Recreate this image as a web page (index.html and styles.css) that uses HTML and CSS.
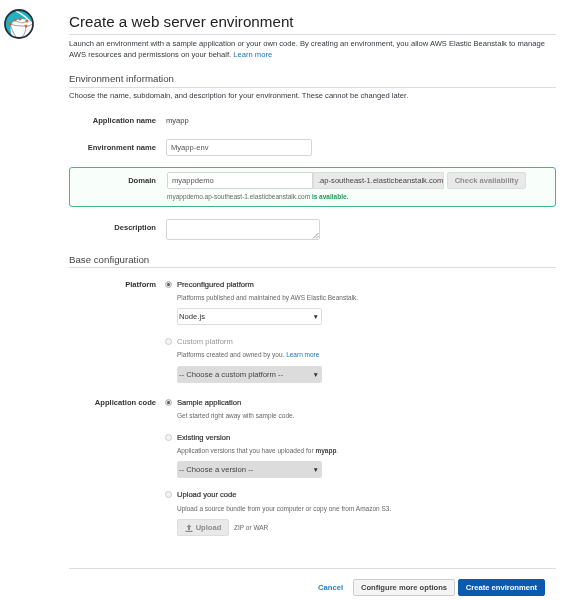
FILE: index.html
```html
<!DOCTYPE html>
<html lang="en">
<head>
<meta charset="utf-8">
<title>Create a web server environment</title>
<link rel="stylesheet" href="styles.css">
</head>
<body>
<div class="page">
  <aside class="logo">
    <svg width="32" height="32" viewBox="0 0 32 32">
      <circle cx="16" cy="16" r="14" fill="#fff"/>
      <path d="M9 28C4 25 2 20 2 16 2 8 8 2 16 2c4 0 8 2 10.500 5.500C28 10 29 12 29 14 23 10 15 10 10 14 7 17 7 23 9 28z" fill="#1fb3c4"/>
      <path d="M13 3C17 5 22 7 27 14" fill="none" stroke="#fff" stroke-width="1.400"/>
      <path d="M7 16c5 2 11 2 16 2M23 18c0 4-1 8-4 11M12 12c4 3 9 4 12 1M7 16c2 5 3 9 6 13M23 18c2 0 4 0 6-2" fill="none" stroke="#7d858b" stroke-width=".8"/>
      <circle cx="16" cy="16" r="14" fill="none" stroke="#27303a" stroke-width="1.800"/>
      <g fill="#d9663a"><circle cx="7" cy="16" r="1.700"/><circle cx="12" cy="12" r="1.500"/><circle cx="17" cy="11" r="1.500"/><circle cx="24" cy="13" r="1.600"/><circle cx="23" cy="18" r="1.500"/></g>
    </svg>
  </aside>
  <main class="main">
    <h1 class="title">Create a web server environment</h1>
    <p class="intro">Launch an environment with a sample application or your own code. By creating an environment, you allow AWS Elastic Beanstalk to manage AWS resources and permissions on your behalf. <a href="#">Learn more</a></p>

    <h2 class="section">Environment information</h2>
    <p class="section-note">Choose the name, subdomain, and description for your environment. These cannot be changed later.</p>

    <div class="row row-app">
      <div class="label">Application name</div>
      <div class="value">myapp</div>
    </div>
    <div class="row row-env">
      <div class="label">Environment name</div>
      <div class="input input-env">Myapp-env</div>
    </div>
    <div class="domain-box">
      <div class="domain-line">
        <div class="label">Domain</div>
        <div class="input input-domain">myappdemo</div>
        <div class="addon">.ap-southeast-1.elasticbeanstalk.com</div>
        <div class="btn btn-check">Check availability</div>
      </div>
      <div class="domain-help">myappdemo.ap-southeast-1.elasticbeanstalk.com <b>is available.</b></div>
    </div>
    <div class="row row-desc">
      <div class="label">Description</div>
      <div class="textarea">
        <svg class="grip" width="7" height="7" viewBox="0 0 7 7"><path d="M1 6.500 6.500 1M4 6.500 6.500 4" stroke="#777" stroke-width=".8"/></svg>
      </div>
    </div>

    <h2 class="section section-base">Base configuration</h2>

    <div class="row row-platform">
      <div class="label">Platform</div>
      <div class="options">
        <div class="radio-line"><span class="radio on"></span><span class="opt">Preconfigured platform</span></div>
        <p class="hint">Platforms published and maintained by AWS Elastic Beanstalk.</p>
        <div class="select"><span>Node.js</span><span class="caret">▼</span></div>
        <div class="radio-line gap-custom"><span class="radio off"></span><span class="opt muted">Custom platform</span></div>
        <p class="hint">Platforms created and owned by you. <a href="#">Learn more</a></p>
        <div class="select disabled select-custom"><span>-- Choose a custom platform --</span><span class="caret">▼</span></div>
      </div>
    </div>

    <div class="row row-code">
      <div class="label">Application code</div>
      <div class="options">
        <div class="radio-line"><span class="radio on"></span><span class="opt">Sample application</span></div>
        <p class="hint">Get started right away with sample code.</p>
        <div class="radio-line gap-existing"><span class="radio off"></span><span class="opt">Existing version</span></div>
        <p class="hint">Application versions that you have uploaded for <b>myapp</b>.</p>
        <div class="select disabled"><span>-- Choose a version --</span><span class="caret">▼</span></div>
        <div class="radio-line gap-upload"><span class="radio off"></span><span class="opt">Upload your code</span></div>
        <p class="hint hint-upload">Upload a source bundle from your computer or copy one from Amazon S3.</p>
        <div class="upload-line">
          <div class="btn btn-upload">
            <svg width="8" height="8" viewBox="0 0 8 8"><path d="M4 .5 6.500 3H5v3H3V3H1.500zM.5 6.800h7V8h-7z" fill="#8b8b8b"/></svg>
            Upload
          </div>
          <span class="zip">ZIP or WAR</span>
        </div>
      </div>
    </div>

    <footer class="footer">
      <a class="cancel" href="#">Cancel</a>
      <div class="btn btn-more">Configure more options</div>
      <div class="btn btn-create">Create environment</div>
    </footer>
  </main>
</div>
</body>
</html>
```
FILE: styles.css
```css
* { box-sizing: border-box; }
html, body { margin: 0; padding: 0; background: #fff; }
body {
  font-family: "Liberation Sans", Arial, sans-serif;
  font-size: 7.6px;
  line-height: 11px;
  color: #33383d;
  height: 600px;
  overflow: hidden;
}
a { color: #1d72b3; text-decoration: none; }
p { margin: 0; }
.page { display: flex; filter: blur(.3px); }
.logo { width: 69px; padding: 8px 0 0 3px; flex: none; }
.logo svg { display: block; }
.main { width: 487px; flex: none; }

.title {
  margin: 0;
  padding-top: 12px;
  height: 35px;
  font-size: 15.2px;
  line-height: 19px;
  font-weight: 400;
  color: #222;
  border-bottom: 1px solid #dcdcdc;
}
.intro { margin-top: 3px; line-height: 11px; }
.section {
  margin: 12px 0 0;
  height: 16px;
  font-size: 9.700px;
  line-height: 13px;
  font-weight: 400;
  color: #444;
  border-bottom: 1px solid #dcdcdc;
}
.section-base { margin-top: 13px; height: 15px; }
.section-note { margin-top: 2px; }

.row { display: flex; }
.label {
  width: 87px;
  flex: none;
  margin-right: 10px;
  text-align: right;
  font-weight: 700;
  color: #333;
}
.row-app { margin-top: 14px; }
.value { color: #444; }
.row-env { margin-top: 13px; align-items: center; }
.input {
  height: 17px;
  line-height: 15px;
  padding: 0 4px;
  border: 1px solid #d5d5d5;
  border-radius: 2px;
  background: #fff;
  color: #555;
}
.input-env { width: 146px; }

.domain-box {
  margin-top: 11px;
  height: 40px;
  padding-top: 4px;
  border: 1px solid #43b97a;
  border-radius: 3px;
  background: #f8fffb;
}
.domain-line { display: flex; align-items: center; }
.domain-line .label { width: 86px; margin-right: 11px; }
.input-domain { width: 146px; border-radius: 2px 0 0 2px; }
.addon {
  width: 131px;
  height: 17px;
  line-height: 15px;
  padding-left: 4px;
  border: 1px solid #ddd;
  background: #e9e9e9;
  color: #444;
  white-space: nowrap;
}
.btn {
  display: flex;
  align-items: center;
  justify-content: center;
  height: 17px;
  border: 1px solid #ddd;
  border-radius: 2px;
  background: #e9e9e9;
  color: #8e8e8e;
  font-weight: 700;
  white-space: nowrap;
}
.btn-check { width: 79px; margin-left: 3px; }
.domain-help {
  margin: 2px 0 0 97px;
  font-size: 6.500px;
  line-height: 11px;
  color: #666;
}
.domain-help b { color: #1d9a55; }

.row-desc { margin-top: 12px; }
.row-desc .label { padding-top: 3px; }
.textarea {
  position: relative;
  width: 154px;
  height: 21px;
  border: 1px solid #d5d5d5;
  border-radius: 2px;
}
.grip { position: absolute; right: 0; bottom: 0; }

.row-platform { margin-top: 11px; }
.row-code { margin-top: 14px; }
.options { display: flex; flex-direction: column; align-items: flex-start; }
.radio-line { display: flex; align-items: center; height: 11px; margin-left: -1px; }
.radio {
  width: 7px;
  height: 7px;
  margin-right: 5px;
  border-radius: 50%;
  border: 1px solid #c9c9c9;
  background: #f4f4f4;
}
.radio.on { background: #555; box-shadow: inset 0 0 0 1px #eee; }
.opt { color: #333; font-weight: 400; -webkit-text-stroke: .2px #333; }
.opt.muted { color: #999; -webkit-text-stroke: 0; }
.hint { margin: 2px 0 0 11px; font-size: 6.500px; line-height: 11px; color: #666; }
.hint b { color: #444; }
.hint-upload { margin-top: 3px; }
.select {
  display: flex;
  justify-content: space-between;
  width: 145px;
  height: 17px;
  margin: 5px 0 0 11px;
  padding: 0 2px 0 1px;
  font-size: 7.700px;
  line-height: 15px;
  border: 1px solid #ddd;
  border-radius: 2px;
  background: #fff;
  color: #333;
}
.select.disabled { background: #dcdcdc; color: #444; }
.select-custom { margin-top: 6px; }
.caret {
  font-size: 6.500px;
  color: #333;
}
.gap-custom { margin-top: 11px; }
.gap-existing { margin-top: 11px; }
.gap-upload { margin-top: 11px; }
.upload-line { display: flex; align-items: center; margin: 5px 0 0 11px; }
.btn-upload { width: 52px; gap: 3px; }
.zip { margin-left: 5px; font-size: 6.500px; color: #666; }

.footer {
  display: flex;
  justify-content: flex-end;
  align-items: center;
  margin-top: 32px;
  padding: 10px 11px 0 0;
  border-top: 1px solid #dcdcdc;
}
.cancel { margin-right: 10px; font-weight: 700; color: #2a82c0; }
.btn-more {
  width: 102px;
  margin-right: 3px;
  background: #f4f4f4;
  border-color: #ccc;
  color: #444;
}
.btn-create {
  width: 87px;
  background: #0a5ab0;
  border-color: #0a5ab0;
  color: #fff;
}
```
